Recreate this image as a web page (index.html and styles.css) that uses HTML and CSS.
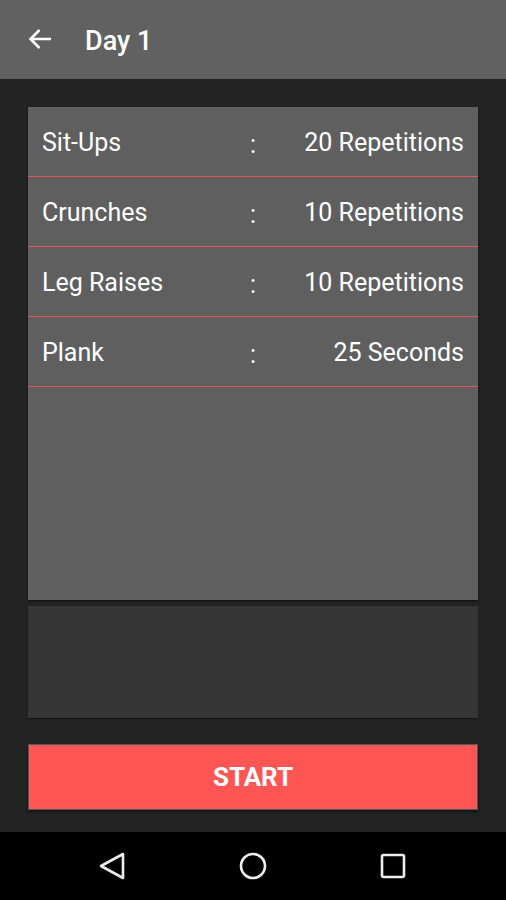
FILE: index.html
```html
<!DOCTYPE html>
<html lang="en">

<head>
	<meta charset="UTF-8" />
	<meta name="viewport" content="width=device-width, initial-scale=1.0" />
	<title>Day 1</title>
	<link rel="stylesheet" href="styles.css">
</head>

<body>
	<div class="app-bar">
		<svg class="back-icon" width="24" height="22" viewBox="0 0 24 22">
			<path d="M23 11 H2.5 M11.5 2 L2.5 11 L11.5 20" fill="none" stroke="#ffffff" stroke-width="2.6" />
		</svg>
		<h1 class="title">Day 1</h1>
	</div>

	<div class="content">
		<div class="exercise-list">
			<div class="exercise-row">
				<span class="name">Sit-Ups</span>
				<span class="colon">:</span>
				<span class="amount">20 Repetitions</span>
			</div>
			<div class="exercise-row">
				<span class="name">Crunches</span>
				<span class="colon">:</span>
				<span class="amount">10 Repetitions</span>
			</div>
			<div class="exercise-row">
				<span class="name">Leg Raises</span>
				<span class="colon">:</span>
				<span class="amount">10 Repetitions</span>
			</div>
			<div class="exercise-row">
				<span class="name">Plank</span>
				<span class="colon">:</span>
				<span class="amount">25 Seconds</span>
			</div>
		</div>
		<div class="info-panel"></div>
		<button class="start-button">START</button>
	</div>

	<div class="nav-bar">
		<svg width="28" height="28" viewBox="0 0 28 28">
			<path d="M24 2 L2 14 L24 26 Z" fill="none" stroke="#eeeeee" stroke-width="2.6" stroke-linejoin="round" />
		</svg>
		<svg width="28" height="28" viewBox="0 0 28 28">
			<circle cx="14" cy="14" r="12" fill="none" stroke="#eeeeee" stroke-width="2.6" />
		</svg>
		<svg width="28" height="28" viewBox="0 0 28 28">
			<rect x="3" y="3" width="22" height="22" rx="1.5" fill="none" stroke="#eeeeee" stroke-width="2.6" />
		</svg>
	</div>
</body>

</html>
```

FILE: styles.css
```css
body {
	margin: 0;
	height: 900px;
	display: flex;
	flex-direction: column;
	background-color: #222222;
	font-family: Roboto, "Noto Sans", sans-serif;
	color: #ffffff;
	overflow: hidden;
}

.app-bar {
	height: 79px;
	flex-shrink: 0;
	display: flex;
	align-items: center;
	background-color: #616161;
	padding-left: 28px;
	box-sizing: border-box;
}

.back-icon {
	margin-top: -2px;
}

.title {
	margin: 2px 0 0 33px;
	font-size: 27px;
	font-weight: 500;
}

.content {
	flex: 1;
	display: flex;
	flex-direction: column;
	padding: 28px 28px 22px;
	background-color: #232323;
}

.exercise-list {
	height: 493px;
	background-color: #5f5f5f;
	box-shadow: 0 1px 2px rgba(0, 0, 0, 0.6);
}

.exercise-row {
	height: 69px;
	display: grid;
	grid-template-columns: 1fr auto 1fr;
	align-items: center;
	padding: 2px 14px 0;
	box-sizing: border-box;
	height: 70px;
	border-bottom: 1px solid #e05555;
	font-size: 25px;
}

.colon {
	padding-top: 4px;
}

.amount {
	text-align: right;
}

.info-panel {
	height: 112px;
	margin-top: 6px;
	background-color: #363636;
	box-shadow: 0 1px 1px rgba(0, 0, 0, 0.4);
}

.start-button {
	margin-top: 26px;
	height: 66px;
	background-color: #ff5555;
	border: 1px solid #4d5a5a;
	color: #ffffff;
	font-family: Roboto, "Noto Sans", sans-serif;
	font-size: 26px;
	font-weight: 700;
	box-shadow: 0 2px 3px rgba(0, 0, 0, 0.5);
}

.nav-bar {
	height: 68px;
	flex-shrink: 0;
	background-color: #000000;
	display: flex;
	justify-content: space-between;
	align-items: center;
	padding: 0 99px;
}
```
